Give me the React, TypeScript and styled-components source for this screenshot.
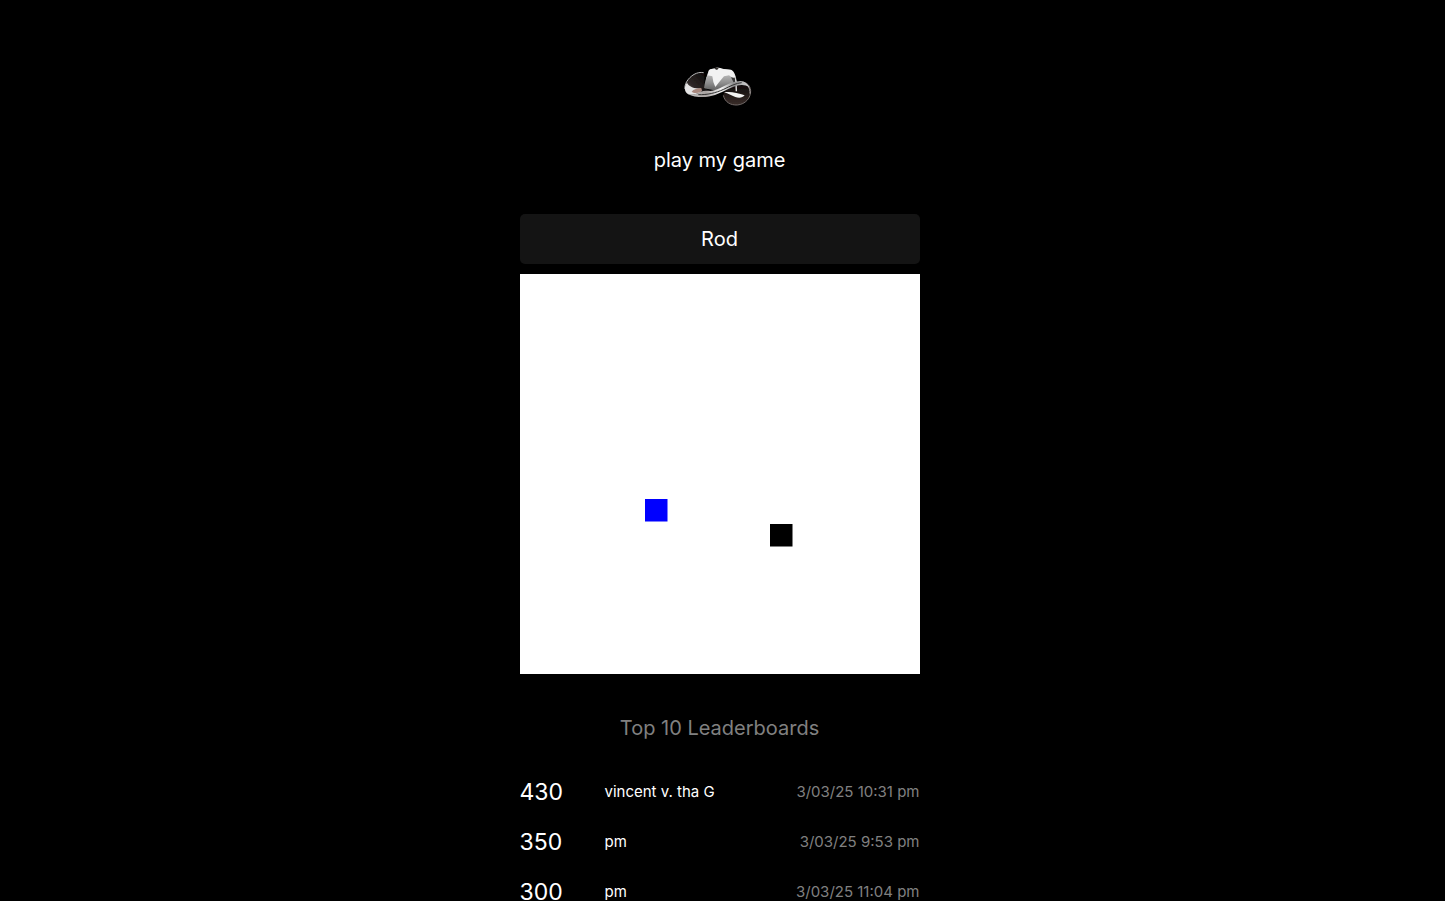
import React, { useState } from 'react';
import styled, { createGlobalStyle } from 'styled-components';

const GlobalStyle = createGlobalStyle`
  *, *::before, *::after { box-sizing: border-box; }
  body {
    margin: 0;
    background: #000;
    color: #fff;
    font-family: Inter, "Liberation Sans", sans-serif;
  }
`;

const Page = styled.main`
  display: flex;
  flex-direction: column;
  align-items: center;
  height: 100vh;
  padding: 56px 6px 0 0;
  overflow-y: auto;
  scrollbar-width: none;
`;

const Column = styled.div`
  display: flex;
  flex-direction: column;
  align-items: center;
  width: 100%;
  max-width: 400px;
`;

const Logo = styled.svg`
  display: block;
  width: 90px;
  height: 60px;
`;

const Title = styled.h1<{ $muted?: boolean }>`
  margin: 0;
  padding: ${(p) => (p.$muted ? '42px 0 27px' : '32px 0 42px')};
  font-size: 20px;
  line-height: 24px;
  font-weight: 400;
  color: ${(p) => (p.$muted ? '#808080' : '#fff')};
`;

const NameInput = styled.input`
  display: block;
  width: 100%;
  height: 50px;
  margin: 0 0 10px;
  padding: 0 16px;
  border: 0;
  border-radius: 5px;
  outline: 0;
  background: #141414;
  color: #fff;
  font: inherit;
  font-size: 20px;
  text-align: center;
`;

const Board = styled.svg`
  display: block;
  width: 100%;
  aspect-ratio: 1;
  background: #fff;
`;

const Scores = styled.table`
  width: 100%;
  border-collapse: collapse;
  table-layout: fixed;
`;

const Row = styled.tr`
  height: 50px;
`;

const Score = styled.td`
  width: 85px;
  padding: 0;
  font-size: 23px;
  line-height: 30px;
`;

const Player = styled.td`
  padding: 0;
  font-size: 15px;
  line-height: 20px;
`;

const PlayedAt = styled(Player)`
  color: #808080;
  text-align: right;
`;

const scores = [
  { score: 430, name: 'vincent v. tha G', date: '3/03/25 10:31 pm' },
  { score: 350, name: 'pm', date: '3/03/25 9:53 pm' },
  { score: 300, name: 'pm', date: '3/03/25 11:04 pm' },
];

function HatLogo() {
  return (
    <Logo viewBox="0 0 270 180" role="img" aria-label="Chrome cowboy hat">
      <defs>
        <filter id="sheen" x="-5%" y="-5%" width="110%" height="110%">
          <feGaussianBlur stdDeviation="1.2" />
        </filter>
        <linearGradient id="crown" x1="0" y1="0" x2="0" y2="1">
          <stop offset="0" stopColor="#f0f0f0" />
          <stop offset="0.5" stopColor="#a8a8a8" />
          <stop offset="1" stopColor="#606060" />
        </linearGradient>
        <linearGradient id="facet" x1="0" y1="0" x2="0" y2="1">
          <stop offset="0" stopColor="#b8b8b8" />
          <stop offset="0.6" stopColor="#8c8c8c" />
          <stop offset="1" stopColor="#686868" />
        </linearGradient>
        <linearGradient id="inner" x1="1" y1="0" x2="0" y2="1">
          <stop offset="0" stopColor="#0c0a0a" />
          <stop offset="0.6" stopColor="#2c2625" />
          <stop offset="1" stopColor="#777070" />
        </linearGradient>
        <linearGradient id="sweep" x1="0" y1="0" x2="1" y2="0">
          <stop offset="0" stopColor="#c8c8c8" />
          <stop offset="0.3" stopColor="#a8a2a0" />
          <stop offset="0.55" stopColor="#f4f4f4" />
          <stop offset="0.75" stopColor="#8d8d8d" />
          <stop offset="1" stopColor="#d8d8d8" />
        </linearGradient>
        <linearGradient id="under" x1="0" y1="0" x2="0" y2="1">
          <stop offset="0" stopColor="#080606" />
          <stop offset="1" stopColor="#3a2d2a" />
        </linearGradient>
      </defs>
      <g filter="url(#sheen)">
        {/* left brim */}
        <path d="M88 51C66 46 46 59 35 77C27 91 27 106 38 114C54 122 78 118 96 106L88 80Z" fill="url(#inner)" />
        <path d="M86 50C66 46 46 59 35 77C31 84 29 92 30 99" fill="none" stroke="#b8b8b8" strokeWidth="3" />
        <path d="M36 80C27 92 28 106 38 113C50 118 66 114 78 108L82 97C68 99 54 97 46 91C41 87 38 85 36 80Z" fill="#e4e4e4" />
        <path d="M50 107C56 99 70 95 84 96L78 107C68 112 56 112 50 107Z" fill="#a8887e" />
        <path d="M78 94L90 92L96 101L82 106Z" fill="#241c1a" />
        {/* right brim */}
        <path d="M145 116C148 137 165 148 187 147C211 145 228 126 227 103C225 88 215 79 202 78L150 104Z" fill="url(#under)" />
        <path d="M145 118C150 139 167 148 187 147C211 145 228 126 227 103C225 88 215 79 202 78" fill="none" stroke="#706866" strokeWidth="3" />
        <path d="M205 79C218 84 226 96 225 113" fill="none" stroke="#aaa6a5" strokeWidth="3" />
        <path d="M147 109C165 106 188 110 209 118C203 126 191 127 181 123C169 118 160 113 147 109Z" fill="#f5f5f5" />
        {/* crown */}
        <path d="M87 97C90 76 95 59 102 42C108 37 116 39 123 35C130 34 138 37 146 39L168 41C178 45 182 58 186 78L150 96L125 104Z" fill="url(#crown)" />
        <path d="M94 64L112 56L121 92L116 99L90 93Z" fill="url(#facet)" />
        <path d="M144 60L162 56L176 76L178 82L158 92L124 99L122 90Z" fill="url(#facet)" />
        <path d="M102 43C108 37 116 40 123 36C130 35 138 38 146 40L168 42C174 45 178 52 181 62L174 66L162 58L147 61L132 79L121 93L115 78L112 61L98 58Z" fill="#f2f2f2" />
        <path d="M168 64L179 66L183 80L177 82Z" fill="#383838" />
        <path d="M118 38L123 34L131 37L126 42Z" fill="#302d2c" />
        <path d="M180 60L185 78L186 106L182 106L181 82Z" fill="#e6e6e6" />
        {/* hat band and sweeping edge */}
        <path d="M84 95C98 102 110 105 126 102C148 96 162 87 181 83L181 87L125 108C105 109 91 105 82 101Z" fill="#171313" />
        <path d="M78 107C92 101 104 108 118 103C142 96 164 76 196 75C212 76 221 87 223 95C206 81 184 89 165 97C139 109 119 121 92 123C74 124 52 122 36 113C52 117 66 115 78 107Z" fill="url(#sweep)" />
        <path d="M70 116C96 117 122 111 146 100C166 90 184 81 200 80" fill="none" stroke="#303030" strokeWidth="3" />
      </g>
    </Logo>
  );
}

export default function App() {
  const [name, setName] = useState('Rod');

  return (
    <>
      <GlobalStyle />
      <Page>
        <Column>
          <HatLogo />
          <Title>play my game</Title>
          <NameInput
            aria-label="Player name"
            value={name}
            onChange={(e) => setName(e.target.value)}
          />
          {/* 16 by 16 cells, each piece fills nine tenths of its cell */}
          <Board viewBox="0 0 16 16" role="img" aria-label="Game board">
            <rect x="5" y="9" width="0.9" height="0.9" fill="#00f" />
            <rect x="10" y="10" width="0.9" height="0.9" fill="#000" />
          </Board>
          <Title as="h2" $muted>Top 10 Leaderboards</Title>
          <Scores aria-label="Top 10 Leaderboards">
            <tbody>
              {scores.map((s) => (
                <Row key={s.date}>
                  <Score>{s.score}</Score>
                  <Player>{s.name}</Player>
                  <PlayedAt>{s.date}</PlayedAt>
                </Row>
              ))}
            </tbody>
          </Scores>
        </Column>
      </Page>
    </>
  );
}
